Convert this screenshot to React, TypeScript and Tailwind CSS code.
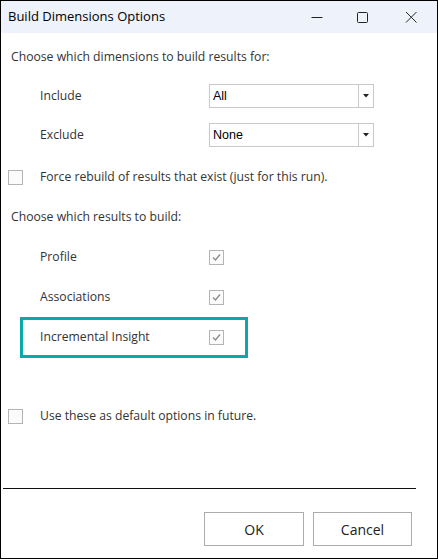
const ui = { fontFamily: '"Open Sans", "Noto Sans", sans-serif' };

function Box({ checked = false }: { checked?: boolean }) {
  return (
    <span className="flex h-[15px] w-[15px] items-center justify-center border border-[#b4b4b4] bg-[#fbfbfb]">
      {checked && (
        <svg width="11" height="11" viewBox="0 0 11 11">
          <path d="M2 5.5 L4.5 8 L9 2.5" fill="none" stroke="#8a8a8a" strokeWidth="1.3" />
        </svg>
      )}
    </span>
  );
}

function Select({ value }: { value: string }) {
  return (
    <div className="flex h-[24px] w-[165px] border border-[#c9c9c9] bg-white">
      <span
        className="flex-1 pl-[3px] text-[12.5px] leading-[22px] text-black"
        style={{ fontFamily: '"Liberation Sans", Arial, sans-serif' }}
      >
        {value}
      </span>
      <span className="flex w-[15px] items-center justify-center border-l border-[#c9c9c9]">
        <svg width="6" height="4" viewBox="0 0 6 4">
          <path d="M0 0 H6 L3 3.5 Z" fill="#222" />
        </svg>
      </span>
    </div>
  );
}

function Option({ label }: { label: string }) {
  return (
    <div className="mt-[16px] flex h-[24px] items-center pl-[39px]">
      <span className="w-[169px]">{label}</span>
      <Box checked />
    </div>
  );
}

export default function App() {
  return (
    <div
      className="flex h-[559px] w-[438px] flex-col border border-black bg-white text-[12.2px] text-[#333]"
      style={ui}
    >
      <div className="flex h-[32px] items-center bg-[#eef2fa] pl-[7px] text-[13px] text-black">
        <span className="flex-1">Build Dimensions Options</span>
        <div className="flex items-center text-[#222]">
          <svg width="12" height="12" viewBox="0 0 12 12" className="mr-[33px]">
            <path d="M0.5 6.5 H11.5" stroke="currentColor" strokeWidth="1" />
          </svg>
          <svg width="12" height="12" viewBox="0 0 12 12" className="mr-[37px]">
            <rect x="1.5" y="1.5" width="10" height="10" rx="1" fill="none" stroke="currentColor" strokeWidth="1" />
          </svg>
          <svg width="12" height="12" viewBox="0 0 12 12" className="mr-[20px]">
            <path d="M1 1 L11.5 11.5 M11.5 1 L1 11.5" stroke="currentColor" strokeWidth="1" />
          </svg>
        </div>
      </div>

      <div className="mt-[12px] flex h-[24px] items-center pl-[10px]">
        Choose which dimensions to build results for:
      </div>

      <div className="mt-[15px] flex h-[24px] items-center pl-[39px]">
        <span className="w-[169px]">Include</span>
        <Select value="All" />
      </div>
      <div className="mt-[15px] flex h-[24px] items-center pl-[39px]">
        <span className="w-[169px]">Exclude</span>
        <Select value="None" />
      </div>

      <div className="mt-[18px] flex h-[24px] items-center pl-[7px]">
        <Box />
        <span className="ml-[17px]">Force rebuild of results that exist (just for this run).</span>
      </div>

      <div className="mt-[16px] flex h-[24px] items-center pl-[10px]">
        Choose which results to build:
      </div>

      <Option label="Profile" />
      <Option label="Associations" />

      <div className="ml-[19px] mt-[8px] flex h-[41px] w-[228px] items-center border-[3px] border-[#0aa8a8] pl-[17px]">
        <span className="w-[169px]">Incremental Insight</span>
        <Box checked />
      </div>

      <div className="mt-[46px] flex h-[24px] items-center pl-[7px]">
        <Box />
        <span className="ml-[17px]">Use these as default options in future.</span>
      </div>

      <div className="ml-[2px] mt-[60px] h-[1px] w-[413px] bg-[#111]" />

      <div className="mt-[23px] flex justify-end gap-[9px] pr-[25px]">
        <button className="h-[34px] w-[100px] border border-[#acacac] bg-white text-[14px] text-[#222]">
          OK
        </button>
        <button className="h-[34px] w-[99px] border border-[#acacac] bg-white text-[14px] text-[#222]">
          Cancel
        </button>
      </div>
    </div>
  );
}
